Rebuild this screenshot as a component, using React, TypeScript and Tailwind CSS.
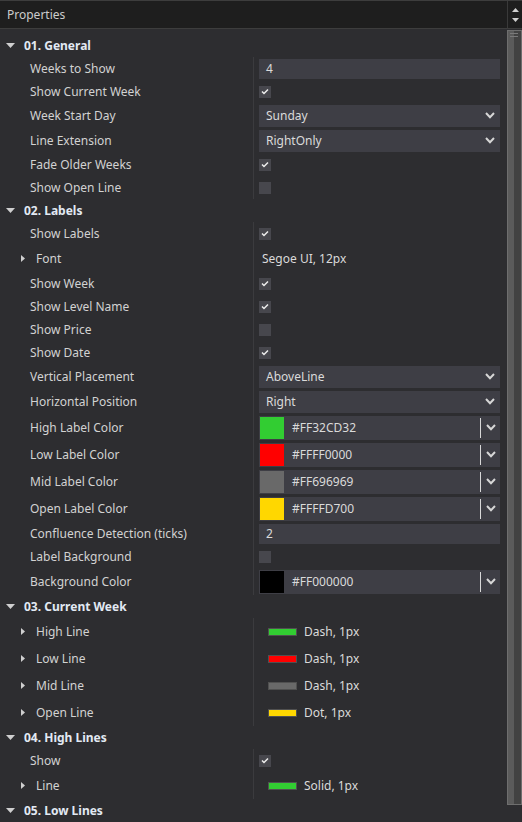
import React from "react";

type Row =
  | { kind: "input"; label: string; value: string }
  | { kind: "check"; label: string; checked: boolean }
  | { kind: "select"; label: string; value: string }
  | { kind: "color"; label: string; value: string; color: string }
  | { kind: "font"; label: string; value: string }
  | { kind: "line"; label: string; value: string; color: string };

type Group = { title: string; rows: Row[] };

const groups: Group[] = [
  {
    title: "01. General",
    rows: [
      { kind: "input", label: "Weeks to Show", value: "4" },
      { kind: "check", label: "Show Current Week", checked: true },
      { kind: "select", label: "Week Start Day", value: "Sunday" },
      { kind: "select", label: "Line Extension", value: "RightOnly" },
      { kind: "check", label: "Fade Older Weeks", checked: true },
      { kind: "check", label: "Show Open Line", checked: false },
    ],
  },
  {
    title: "02. Labels",
    rows: [
      { kind: "check", label: "Show Labels", checked: true },
      { kind: "font", label: "Font", value: "Segoe UI, 12px" },
      { kind: "check", label: "Show Week", checked: true },
      { kind: "check", label: "Show Level Name", checked: true },
      { kind: "check", label: "Show Price", checked: false },
      { kind: "check", label: "Show Date", checked: true },
      { kind: "select", label: "Vertical Placement", value: "AboveLine" },
      { kind: "select", label: "Horizontal Position", value: "Right" },
      { kind: "color", label: "High Label Color", value: "#FF32CD32", color: "#32CD32" },
      { kind: "color", label: "Low Label Color", value: "#FFFF0000", color: "#FF0000" },
      { kind: "color", label: "Mid Label Color", value: "#FF696969", color: "#696969" },
      { kind: "color", label: "Open Label Color", value: "#FFFFD700", color: "#FFD700" },
      { kind: "input", label: "Confluence Detection (ticks)", value: "2" },
      { kind: "check", label: "Label Background", checked: false },
      { kind: "color", label: "Background Color", value: "#FF000000", color: "#000000" },
    ],
  },
  {
    title: "03. Current Week",
    rows: [
      { kind: "line", label: "High Line", value: "Dash, 1px", color: "#32CD32" },
      { kind: "line", label: "Low Line", value: "Dash, 1px", color: "#FF0000" },
      { kind: "line", label: "Mid Line", value: "Dash, 1px", color: "#696969" },
      { kind: "line", label: "Open Line", value: "Dot, 1px", color: "#FFD700" },
    ],
  },
  {
    title: "04. High Lines",
    rows: [
      { kind: "check", label: "Show", checked: true },
      { kind: "line", label: "Line", value: "Solid, 1px", color: "#32CD32" },
    ],
  },
  { title: "05. Low Lines", rows: [] },
];

const Chevron = () => (
  <svg width="10" height="7" viewBox="0 0 10 7" className="block">
    <polyline points="1,1 5,5.2 9,1" fill="none" stroke="#d6d6d6" strokeWidth="2" />
  </svg>
);

const DownTri = () => (
  <svg width="9" height="5" viewBox="0 0 9 5" className="block">
    <polygon points="0,0 9,0 4.5,5" fill="#cfcfcf" />
  </svg>
);

const RightTri = () => (
  <svg width="4" height="7" viewBox="0 0 4 7" className="block">
    <polygon points="0,0 4,3.5 0,7" fill="#cfcfcf" />
  </svg>
);

const CheckBox = ({ checked }: { checked: boolean }) => (
  <div className="w-[12px] h-[12px] bg-[#47474d] flex items-center justify-center">
    {checked && (
      <svg width="8" height="7" viewBox="0 0 8 7" className="block">
        <polyline points="1,3.5 3,5.5 7,1.5" fill="none" stroke="#eeeeee" strokeWidth="1.5" />
      </svg>
    )}
  </div>
);

function rowHeight(r: Row) {
  switch (r.kind) {
    case "select":
      return "h-[25px]";
    case "color":
    case "line":
    case "font":
      return "h-[27px]";
    case "input":
      return "h-[23px]";
    default:
      return "h-[23px]";
  }
}

function Value({ r }: { r: Row }) {
  switch (r.kind) {
    case "input":
      return (
        <div className="w-full h-[20px] bg-[#3e3e45] flex items-center pl-[7px] text-[#dadada]">
          {r.value}
        </div>
      );
    case "check":
      return <CheckBox checked={r.checked} />;
    case "select":
      return (
        <div className="w-full h-[22px] bg-[#3e3e45] flex items-center justify-between pl-[7px] pr-[5px] text-[#dadada]">
          <span>{r.value}</span>
          <Chevron />
        </div>
      );
    case "color":
      return (
        <div className="w-full h-[24px] bg-[#3e3e45] flex items-center text-[#dadada]">
          <div className="ml-[1px] w-[24px] h-[22px]" style={{ backgroundColor: r.color }} />
          <span className="ml-[8px] flex-1">{r.value}</span>
          <div className="w-[1px] h-[20px] bg-[#d8d8d8]" />
          <div className="w-[19px] flex items-center justify-center">
            <Chevron />
          </div>
        </div>
      );
    case "font":
      return <span className="ml-[3px] text-[#dadada]">{r.value}</span>;
    case "line":
      return (
        <div className="flex items-center text-[#dadada]">
          <div
            className="ml-[9px] w-[29px] h-[8px] border border-[#505050]"
            style={{ backgroundColor: r.color }}
          />
          <span className="ml-[7px]">{r.value}</span>
        </div>
      );
  }
}

function Label({ r }: { r: Row }) {
  const expandable = r.kind === "font" || r.kind === "line";
  if (expandable) {
    return (
      <div className="flex items-center pl-[21px]">
        <RightTri />
        <span className="ml-[11px]">{r.label}</span>
      </div>
    );
  }
  return <span className="pl-[30px]">{r.label}</span>;
}

export default function App() {
  return (
    <div
      className="w-[522px] h-[822px] bg-[#2d2d30] overflow-hidden flex flex-col text-[12px] text-[#d2d2d2]"
      style={{ fontFamily: '"Noto Sans", "Open Sans", sans-serif' }}
    >
      <div className="h-[29px] border-y border-[#3d3d3d] bg-[#1e1e1e] flex shrink-0">
        <div className="flex-1 pl-[7px] flex items-center text-[#cccccc]">Properties</div>
        <div className="w-[15px] border-l border-[#3a3a3a] flex flex-col items-center justify-center gap-[6px]">
          <svg width="7" height="4" viewBox="0 0 7 4" className="block">
            <polygon points="0,4 7,4 3.5,0" fill="#d0d0d0" />
          </svg>
          <svg width="7" height="4" viewBox="0 0 7 4" className="block">
            <polygon points="0,0 7,0 3.5,4" fill="#d0d0d0" />
          </svg>
        </div>
      </div>
      <div className="flex flex-1 min-h-0">
        <div className="flex-1 pt-[5px]">
          {groups.map((g) => (
            <div key={g.title}>
              <div className="h-[23px] flex items-center pl-[6px]">
                <DownTri />
                <span className="ml-[9px] font-bold text-[#e2e9f3]">{g.title}</span>
              </div>
              {g.rows.map((r, i) => (
                <div key={i} className={`flex ${rowHeight(r)}`}>
                  <div className="w-[253px] flex items-center shrink-0">
                    <Label r={r} />
                  </div>
                  <div className="flex-1 border-l border-[#3b3b3e] pl-[5px] pr-[7px] flex items-center">
                    <Value r={r} />
                  </div>
                </div>
              ))}
            </div>
          ))}
        </div>
        <div className="w-[15px] shrink-0 pt-[1px] pb-[17px] flex flex-col">
          <div className="flex-1 border border-[#6e6e6e] flex relative">
            <div className="w-[6px] bg-[#5b5b5b]" />
            <div className="flex-1 bg-[#424242]" />
            <div className="absolute left-[2px] top-[2px] w-[8px] flex flex-col gap-[2px]">
              <div className="h-[1px] bg-[#7a7a7a]" />
              <div className="h-[1px] bg-[#7a7a7a]" />
            </div>
          </div>
        </div>
      </div>
    </div>
  );
}
